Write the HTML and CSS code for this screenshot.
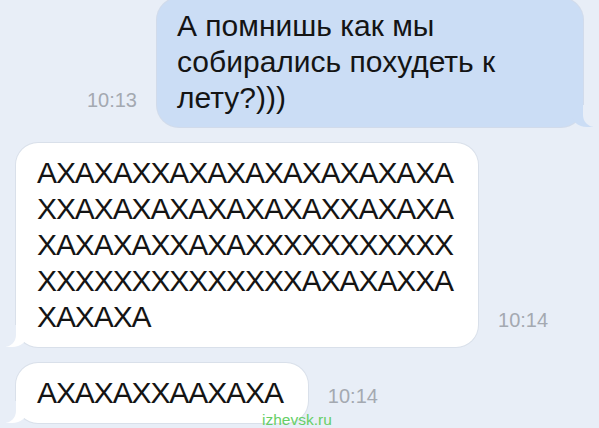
FILE: index.html
```html
<!DOCTYPE html>
<html lang="ru">
<head>
    <meta charset="UTF-8">
    <title>Переписка</title>

    <link rel="stylesheet" href="styles.css">
</head>

<body>
    <!-- переписка -->
    <main class="chat">

        <!-- 1. моё сообщение (справа) -->
        <div class="row out">
            <span class="time">10:13</span>
            <p class="bubble blue">А помнишь как мы собирались похудеть к лету?)))</p>
        </div>

        <!-- 2. ответ (слева) -->
        <div class="row in">
            <p class="bubble white laugh">АХАХАХХАХАХАХАХАХАХАХА<br>ХХАХАХАХАХАХАХАХХАХАХА<br>ХАХАХАХХАХАХХХХХХХХХХХ<br>ХХХХХХХХХХХХХХАХАХАХХА<br>ХАХАХА</p>
            <span class="time">10:14</span>
        </div>

        <!-- 3. ещё ответ -->
        <div class="row in">
            <p class="bubble white laugh">АХАХАХХААХАХА</p>
            <span class="time">10:14</span>
        </div>

    </main>

    <!-- водяной знак -->
    <span class="wmark">izhevsk.ru</span>
</body>
</html>
```

FILE: styles.css
```css
html,
body {
    margin: 0;
    padding: 0;
}

body {
    position: relative;
    height: 428px;
    overflow: hidden;
    background: #e8eef7;
    font-family: "Liberation Sans", Arial, sans-serif;
    color: #141414;
}

/* переписка */
.chat {
    display: flex;
    flex-direction: column;
    gap: 16px;
    margin-top: -2px;
    /* верх первого пузыря срезан краем */
    padding: 0 16px;
}

/* строка: пузырь + время */
.row {
    display: flex;
    align-items: flex-end;
    gap: 20px;
}

.row.out {
    justify-content: flex-end;
}

/* время */
.time {
    padding-bottom: 17px;
    font-size: 20px;
    line-height: 20px;
    color: #a4a9b1;
}

/* пузырь */
.bubble {
    position: relative;
    margin: 0;
    font-size: 30px;
    line-height: 36px;
    border-radius: 22px;
}

/* 1. синий (мой) */
.blue {
    box-sizing: border-box;
    width: 426px;
    padding: 10px 20px 11px;
    background: #cbddf5;
    box-shadow: 0 0 0 1px rgba(140, 165, 200, .25);
}

/* хвостик справа */
.blue::before {
    content: "";
    position: absolute;
    right: -10px;
    bottom: 0;
    width: 22px;
    height: 22px;
    background: #cbddf5;
    border-bottom-left-radius: 16px 14px;
}

.blue::after {
    content: "";
    position: absolute;
    right: -26px;
    bottom: 0;
    width: 26px;
    height: 22px;
    background: #e8eef7;
    border-bottom-left-radius: 12px;
}

/* 2. белый (ответ) */
.white {
    padding: 12px 25px 12px 21px;
    background: #fff;
    box-shadow: 0 0 0 1px rgba(160, 170, 185, .2);
}

/* хвостик слева */
.white::before {
    content: "";
    position: absolute;
    left: -10px;
    bottom: 0;
    width: 22px;
    height: 22px;
    background: #fff;
    border-bottom-right-radius: 16px 14px;
}

.white::after {
    content: "";
    position: absolute;
    left: -26px;
    bottom: 0;
    width: 26px;
    height: 22px;
    background: #e8eef7;
    border-bottom-right-radius: 12px;
}

/* АХАХА - буквы у́же, чем в Liberation */
.laugh {
    letter-spacing: -1.1px;
}

/* водяной знак поверх */
.wmark {
    position: absolute;
    left: 262px;
    top: 412px;
    font-size: 15.5px;
    line-height: 16px;
    color: #66cf66;
}
```
